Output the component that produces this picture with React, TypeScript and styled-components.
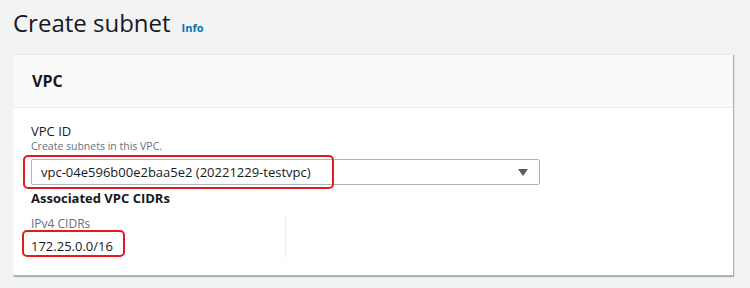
import styled, { createGlobalStyle } from "styled-components";

const GlobalStyle = createGlobalStyle`
  html, body {
    margin: 0;
    padding: 0;
    background: #f2f3f3;
    font-family: "Open Sans", "Noto Sans", Arial, sans-serif;
    color: #16191f;
  }
`;

const Page = styled.div`
  width: 750px;
  height: 288px;
  overflow: hidden;
  padding: 0 17px 0 13px;
  box-sizing: border-box;
`;

const TitleRow = styled.div`
  display: flex;
  align-items: baseline;
  gap: 11px;
  height: 54px;
  padding-top: 6px;
  box-sizing: border-box;
`;

const Title = styled.h1`
  margin: 0;
  font-size: 24px;
  font-weight: 400;
  line-height: 34px;
  color: #16191f;
`;

const InfoLink = styled.span`
  font-size: 11px;
  font-weight: 700;
  color: #0073bb;
`;

const Card = styled.section`
  background: #fff;
  border-top: 1px solid #eaeded;
  box-shadow: 1px 1px 1px 0 rgba(0, 28, 36, 0.3);
  border-bottom: 1px solid #aab7b8;
`;

const CardHeader = styled.div`
  background: #fafafa;
  border-bottom: 1px solid #eaeded;
  height: 52px;
  display: flex;
  align-items: center;
  padding: 0 19px;
  font-size: 16px;
  font-weight: 700;
`;

const CardBody = styled.div`
  padding: 14px 19px 17px 18px;
`;

const Label = styled.div`
  font-size: 13px;
  line-height: 18px;
`;

const Hint = styled.div`
  font-size: 10.5px;
  line-height: 13px;
  color: #687078;
`;

const SelectWrap = styled.div`
  position: relative;
  margin-top: 6px;
  width: 509px;
`;

const Select = styled.div`
  height: 26px;
  border: 1px solid #aab7b8;
  border-radius: 2px;
  display: flex;
  align-items: center;
  justify-content: space-between;
  padding: 0 11px 0 9px;
  font-size: 13px;
  box-sizing: border-box;
`;

const Caret = styled.span`
  width: 0;
  height: 0;
  border-left: 5px solid transparent;
  border-right: 5px solid transparent;
  border-top: 7px solid #545b64;
`;

// red annotation boxes drawn over the screenshot
const Highlight = styled.div<{ $w: number; $h: number; $l: number; $t: number }>`
  position: absolute;
  left: ${(p) => p.$l}px;
  top: ${(p) => p.$t}px;
  width: ${(p) => p.$w}px;
  height: ${(p) => p.$h}px;
  border: 2px solid #e8191e;
  border-radius: 5px;
  box-sizing: border-box;
  pointer-events: none;
`;

const SubHeading = styled.div`
  margin-top: 4px;
  font-size: 13px;
  font-weight: 700;
  line-height: 18px;
`;

const Columns = styled.div`
  display: grid;
  grid-template-columns: 254px 1fr;
  margin-top: 9px;
`;

const Column = styled.div`
  height: 42px;
  & + & {
    border-left: 1px solid #eaeded;
  }
`;

const KeyLabel = styled.div`
  font-size: 12px;
  line-height: 16px;
  color: #687078;
`;

const ValueWrap = styled.div`
  position: relative;
  margin-top: 5px;
  font-size: 13px;
  line-height: 18px;
`;

export default function App() {
  return (
    <Page>
      <GlobalStyle />
      <TitleRow>
        <Title>Create subnet</Title>
        <InfoLink>Info</InfoLink>
      </TitleRow>
      <Card>
        <CardHeader>VPC</CardHeader>
        <CardBody>
          <Label>VPC ID</Label>
          <Hint>Create subnets in this VPC.</Hint>
          <SelectWrap>
            <Select>
              <span>vpc-04e596b00e2baa5e2 (20221229-testvpc)</span>
              <Caret />
            </Select>
            <Highlight $l={-8} $t={-4} $w={311} $h={34} />
          </SelectWrap>
          <SubHeading>Associated VPC CIDRs</SubHeading>
          <Columns>
            <Column>
              <KeyLabel>IPv4 CIDRs</KeyLabel>
              <ValueWrap>
                172.25.0.0/16
                <Highlight $l={-9} $t={-7} $w={103} $h={27} />
              </ValueWrap>
            </Column>
            <Column />
          </Columns>
        </CardBody>
      </Card>
    </Page>
  );
}
